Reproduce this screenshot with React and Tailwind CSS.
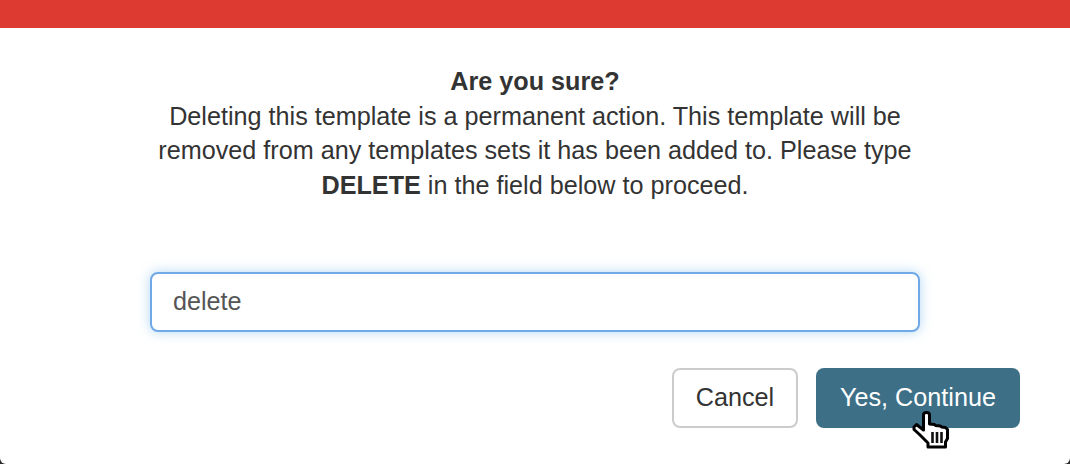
function Cursor() {
  return (
    <svg className="absolute left-[905px] top-[405px]" width="50" height="50" viewBox="0 0 50 50" fill="none">
      <path d="M18.500 10c0-3.500 6-3.500 6 0v9l5 .5 1 1 5 .5 1 1 4 .5 2 2v9l-2 3.500V42H23v-4l-5-5-4-4-5-4.500V22l2.500-2.500 7 5.500V10Z" fill="#fff" stroke="#000" strokeWidth="3" strokeLinejoin="round" />
      <path d="M27.500 27v11M32 27v11M36.500 27v11" stroke="#111" strokeWidth="2.600" />
    </svg>
  );
}

export default function App() {
  return (
    <div className="relative h-[464px] w-[1070px] overflow-hidden bg-[#2a2a2a] font-['Liberation_Sans',sans-serif] text-[25.2px] leading-[34.7px] text-[#333]">
      <div className="flex h-full flex-col rounded-b-[6px] bg-white">
        <div className="h-[28px] bg-[#dd3a32]" />
        <div className="mx-auto mt-[36px] w-[770px] text-center">
          <p className="font-bold">Are you sure?</p>
          <p>
            Deleting this template is a permanent action. This template will be removed from any templates sets it has been added to. Please type <b>DELETE</b> in the field below to proceed.
          </p>
        </div>
        <div className="mx-auto mt-[69px] w-[770px]">
          <input
            readOnly
            value="delete"
            className="h-[60px] w-full rounded-[8px] border-2 border-[#6fa9e6] bg-white px-[21px] text-[#555] shadow-[0_0_12px_rgba(102,175,233,0.5)] outline-none"
          />
        </div>
        <div className="mt-[36px] flex justify-end gap-[18px] pr-[50px]">
          <button className="h-[60px] w-[126px] rounded-[8px] border-2 border-[#ccc] bg-white text-[#333]">Cancel</button>
          <button className="h-[60px] w-[204px] rounded-[8px] bg-[#3d6f87] text-white">Yes, Continue</button>
        </div>
      </div>
      <Cursor />
    </div>
  );
}
